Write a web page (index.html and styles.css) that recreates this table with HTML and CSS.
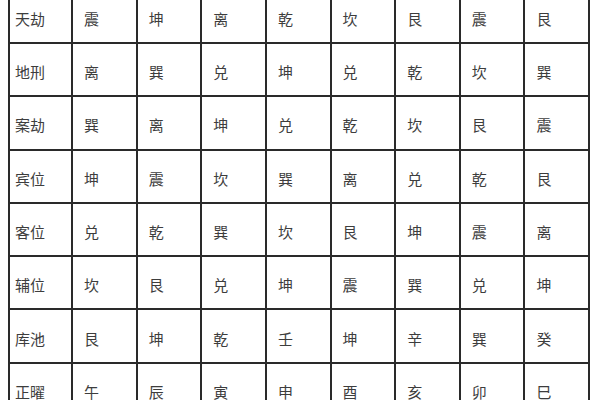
FILE: index.html
```html
<!DOCTYPE html>
<html lang="zh">
<head>
<meta charset="utf-8">
<link rel="stylesheet" href="styles.css">
</head>
<body>
<div class="table">
  <div class="c h">天劫</div><div class="c">震</div><div class="c">坤</div><div class="c">离</div><div class="c">乾</div><div class="c">坎</div><div class="c">艮</div><div class="c">震</div><div class="c">艮</div>
  <div class="c h">地刑</div><div class="c">离</div><div class="c">巽</div><div class="c">兑</div><div class="c">坤</div><div class="c">兑</div><div class="c">乾</div><div class="c">坎</div><div class="c">巽</div>
  <div class="c h">案劫</div><div class="c">巽</div><div class="c">离</div><div class="c">坤</div><div class="c">兑</div><div class="c">乾</div><div class="c">坎</div><div class="c">艮</div><div class="c">震</div>
  <div class="c h">宾位</div><div class="c">坤</div><div class="c">震</div><div class="c">坎</div><div class="c">巽</div><div class="c">离</div><div class="c">兑</div><div class="c">乾</div><div class="c">艮</div>
  <div class="c h">客位</div><div class="c">兑</div><div class="c">乾</div><div class="c">巽</div><div class="c">坎</div><div class="c">艮</div><div class="c">坤</div><div class="c">震</div><div class="c">离</div>
  <div class="c h">辅位</div><div class="c">坎</div><div class="c">艮</div><div class="c">兑</div><div class="c">坤</div><div class="c">震</div><div class="c">巽</div><div class="c">兑</div><div class="c">坤</div>
  <div class="c h">库池</div><div class="c">艮</div><div class="c">坤</div><div class="c">乾</div><div class="c">壬</div><div class="c">坤</div><div class="c">辛</div><div class="c">巽</div><div class="c">癸</div>
  <div class="c h">正曜</div><div class="c">午</div><div class="c">辰</div><div class="c">寅</div><div class="c">申</div><div class="c">酉</div><div class="c">亥</div><div class="c">卯</div><div class="c">巳</div>
</div>
</body>
</html>
```
FILE: styles.css
```css
html, body {
  margin: 0;
  padding: 0;
  background: #ffffff;
  overflow: hidden;
  height: 400px;
}
.table {
  display: grid;
  grid-template-columns: 63px repeat(8, 64.625px);
  grid-auto-rows: 53.3px;
  width: max-content;
  margin-left: 8px;
  margin-top: -11.3px;
  border-left: 2px solid #2a2a2a;
  border-top: 2px solid #2a2a2a;
  font-family: "Noto Sans CJK SC", "Noto Sans", sans-serif;
  font-size: 15px;
  color: #3d3d3d;
}
.c {
  box-sizing: border-box;
  border-right: 2px solid #2a2a2a;
  border-bottom: 2px solid #2a2a2a;
  display: flex;
  align-items: center;
  padding-left: 11px;
  padding-top: 4px;
  line-height: 1;
}
.c.h {
  padding-left: 5px;
}
```
